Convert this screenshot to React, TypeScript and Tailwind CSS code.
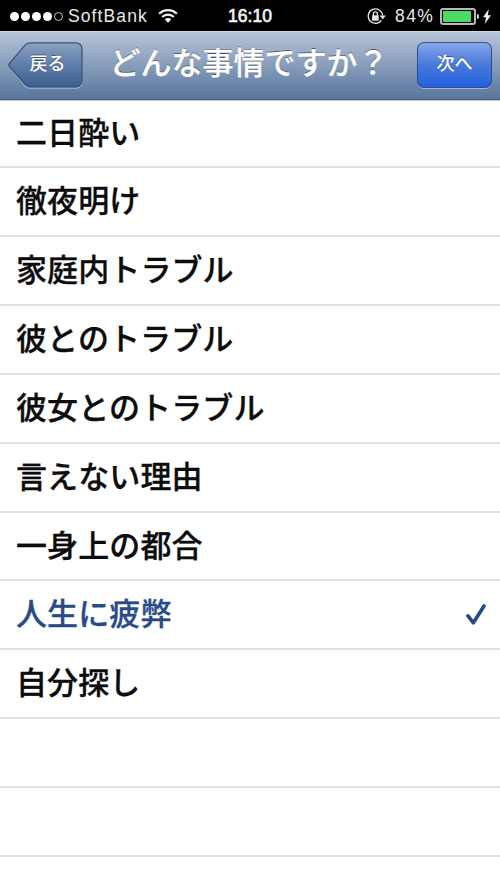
const reasons = [
  '二日酔い',
  '徹夜明け',
  '家庭内トラブル',
  '彼とのトラブル',
  '彼女とのトラブル',
  '言えない理由',
  '一身上の都合',
  '人生に疲弊',
  '自分探し',
];

const selected = '人生に疲弊';

function StatusBar() {
  return (
    <div className="grid h-[31px] grid-cols-[1fr_auto_1fr] items-center bg-black pt-px font-['Liberation_Sans',sans-serif] text-[17.5px] leading-none text-[#e8e8e8]">
      <div className="flex items-center pl-[10px]">
        <div className="flex gap-[2px]">
          {[0, 1, 2, 3].map((i) => (
            <span key={i} className="size-[9px] rounded-full bg-white" />
          ))}
          <span className="size-[9px] rounded-full border border-[#c8c8c8]" />
        </div>
        <span className="ml-[5px] w-[81px] pt-[2px] whitespace-nowrap tracking-[1.1px]">SoftBank</span>
        <svg className="ml-[9px]" width="20" height="16" viewBox="0 0 20 16" fill="none" stroke="#f4f4f4" strokeWidth="2.2">
          <path d="M1.1 5.8a12.6 12.6 0 0 1 17.8 0" />
          <path d="M4.2 9a8.2 8.2 0 0 1 11.6 0" />
          <path d="M6.8 11.4a4.5 4.5 0 0 1 6.4 0L10 14.7z" fill="#f4f4f4" stroke="none" />
        </svg>
      </div>
      <span className="pt-[2px] text-[#f0f0f0] [-webkit-text-stroke:0.7px_currentColor]">16:10</span>
      <div className="flex items-center justify-end pr-[9px]">
        <svg width="19" height="17" viewBox="0 0 19 17" fill="none" stroke="#e8e8e8" strokeWidth="1.3">
          <path d="M14.3 12.3A7.2 7.2 0 1 1 15.6 7.4" />
          <path d="M12.6 7.4h6.2l-3.1 4.1z" fill="#e8e8e8" stroke="none" />
          <path d="M5.1 7.3h6.6v5.4H5.1z" fill="#e8e8e8" stroke="none" />
          <path d="M6.4 7.7V5.9a2 2 0 0 1 4 0v1.8" />
        </svg>
        <span className="ml-[9px] w-[40px] pt-[2px] tracking-[1.4px] whitespace-nowrap">84%</span>
        <span className="ml-[5px] flex h-[17px] w-[36px] rounded-[3px] border-2 border-[#b8b8b8] p-px">
          <span className="w-[28px] bg-[#4cd964]" />
        </span>
        <span className="ml-px h-[5px] w-[2px] rounded-r-full bg-[#d8d8d8]" />
        <svg className="ml-[4px]" width="8" height="15" viewBox="0 0 8 15" fill="#f0f0f0">
          <path d="M5.8 0L0 8.2h3L1.8 15 8 6.3H4.8z" />
        </svg>
      </div>
    </div>
  );
}

function NavBar() {
  return (
    <header className="flex h-[69px] justify-between border-t border-b border-t-[#d0d9e5] border-b-[#426087] bg-linear-to-b from-[#b7c5d9] to-[#58759c] pt-[10px] pr-[8px] pl-[8px] text-white">
      <button className="relative h-[47px] w-[76px] pb-[7px] pl-[3px] text-[18px] leading-none font-medium [text-shadow:0_-1px_0_rgba(0,0,0,0.4)]">
        <svg className="absolute top-0 left-0" width="76" height="47" viewBox="0 0 76 47">
          <defs>
            <linearGradient id="back" x1="0" y1="0" x2="0" y2="1">
              <stop offset="0" stopColor="#8aa2c2" />
              <stop offset="0.5" stopColor="#5e7da9" />
              <stop offset="1" stopColor="#3d6091" />
            </linearGradient>
            <linearGradient id="edge" x1="0" y1="0" x2="0" y2="1">
              <stop offset="0" stopColor="#44536b" />
              <stop offset="1" stopColor="#304f7a" />
            </linearGradient>
          </defs>
          <path d="M22 1.8h46a6 6 0 0 1 6 6v32.4a6 6 0 0 1-6 6H22q-3 0-5-2.4L.8 24" fill="none" stroke="#a4b6cf" strokeWidth="1.2" />
          <path
            d="M22 .8h46a6 6 0 0 1 6 6v32a6 6 0 0 1-6 6H22q-3 0-5-2.4L1.5 24.6q-1.2-1.6 0-3.2L17 3.2Q19 .8 22 .8z"
            fill="url(#back)"
            stroke="url(#edge)"
            strokeWidth="1.3"
          />
        </svg>
        <span className="relative">戻る</span>
      </button>
      <h1 className="-ml-[3px] pt-[2px] text-[31px] leading-[34px] font-medium [text-shadow:0_-1px_0_rgba(0,0,0,0.5)] [-webkit-text-stroke:0.3px_white]">
        どんな事情ですか？
      </h1>
      <button className="h-[46px] w-[75px] rounded-[7px] border border-[#2e4c91] border-t-[#42537c] bg-linear-to-b from-[#86a6e9] via-[#4878db] to-[#2260dd] pb-[6px] text-[18px] leading-none font-medium shadow-[0_1px_0_#a4b6cf] [text-shadow:0_-1px_0_rgba(0,0,0,0.4)]">
        次へ
      </button>
    </header>
  );
}

function Row({ label, checked }: { label?: string; checked?: boolean }) {
  return (
    <li
      className={`flex h-[68.85px] items-center justify-between border-b-2 border-[#e2e2e2] pr-[14px] pl-[16px] first:h-[68.4px] ${
        checked ? 'text-[#284b88]' : 'text-[#0c0c0c]'
      }`}
    >
      <span className="pb-[6px] text-[31px] leading-none font-medium tracking-[0.1px] [-webkit-text-stroke:0.3px_currentColor]">
        {label}
      </span>
      {checked && (
        <svg width="20" height="22" viewBox="0 0 20 22" fill="none" stroke="#254a87" strokeWidth="3.6">
          <path d="M2 11.8l5.4 7L18 2" strokeLinecap="round" strokeLinejoin="round" />
        </svg>
      )}
    </li>
  );
}

export default function App() {
  return (
    <div className="h-[888px] w-[500px] overflow-hidden bg-white font-['Noto_Sans_CJK_JP',sans-serif]">
      <StatusBar />
      <NavBar />
      <ul className="shadow-[inset_0_1px_0_#c9c9d1]">
        {reasons.map((label) => (
          <Row key={label} label={label} checked={label === selected} />
        ))}
        <Row />
        <Row />
      </ul>
    </div>
  );
}
